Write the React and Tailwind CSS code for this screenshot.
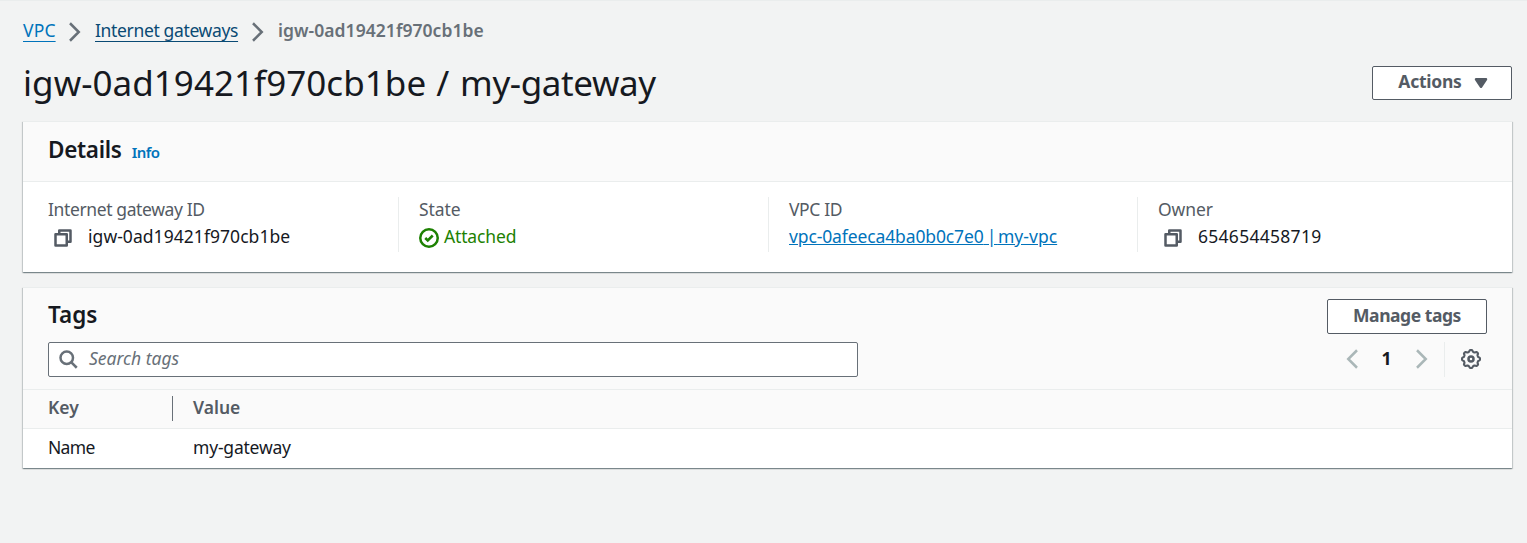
import React from "react";

function Icon({ children, className = "" }) {
  return (
    <svg
      viewBox="0 0 16 16"
      fill="none"
      stroke="currentColor"
      strokeWidth="2"
      className={"block h-5 w-5 shrink-0 " + className}
    >
      {children}
    </svg>
  );
}

const ChevronRight = ({ className }) => (
  <Icon className={className}>
    <path d="M4 1l7 7-7 7" />
  </Icon>
);

const ChevronLeft = ({ className }) => (
  <Icon className={className}>
    <path d="M12 1L5 8l7 7" />
  </Icon>
);

const CopyIcon = () => (
  <Icon className="text-[#545b64]">
    <path d="M2 5h9v9H2z" strokeLinejoin="round" />
    <path d="M5 5V2h9v9h-3" strokeLinejoin="round" />
  </Icon>
);

// Outline of an eight-lobed gear with rounded teeth.
const gearPoints = Array.from({ length: 96 }, (_, i) => {
  const a = (i / 96) * 2 * Math.PI;
  const r = 6.55 + 0.72 * Math.tanh(1.8 * Math.cos(8 * a));
  return `${(8 + r * Math.cos(a)).toFixed(2)},${(8 + r * Math.sin(a)).toFixed(2)}`;
}).join(" ");

const GearIcon = () => (
  <Icon className="text-[#545b64]">
    <polygon points={gearPoints} strokeWidth="1.7" strokeLinejoin="round" />
    <circle cx="8" cy="8" r="2" />
  </Icon>
);

function Field({ label, first, tight, children }) {
  return (
    <div
      className={
        "h-[55px] " + (first ? "pl-[25px]" : "border-l border-[#eaeded] pl-5")
      }
    >
      <div
        className={
          "-mt-px h-[27px] leading-[27px] text-[#545b64] " +
          (tight ? "tracking-[-0.38px]" : "tracking-[-0.1px]")
        }
      >
        {label}
      </div>
      <div className="flex h-[27px] items-center leading-[27px]">{children}</div>
    </div>
  );
}

const panel =
  "bg-white border-t border-[#eaeded] shadow-[0_1px_1px_0_rgba(0,28,36,0.3),1px_1px_1px_0_rgba(0,28,36,0.15),-1px_1px_1px_0_rgba(0,28,36,0.15)]";

export default function App() {
  return (
    <div className="h-[543px] w-[1527px] overflow-hidden border-t border-[#eaeded] bg-[#f2f3f3] pl-[23px] pr-[15px] font-['Noto_Sans',sans-serif] text-[17.5px] text-[#16191f]">
      <nav className="mt-[15px] flex h-7 items-center leading-7">
        <a className="w-[33px] tracking-[0.15px] text-[#0073bb] underline decoration-1 underline-offset-4">VPC</a>
        <ChevronRight className="ml-[9px] mr-[10px] mt-[3px] text-[#687078]" />
        <a className="w-[144px] whitespace-nowrap tracking-[-0.35px] text-[#0a4a74] underline decoration-1 underline-offset-4">Internet gateways</a>
        <ChevronRight className="ml-[9px] mr-[10px] mt-[3px] text-[#687078]" />
        <span className="font-semibold tracking-[0.05px] text-[#687078]">igw-0ad19421f970cb1be</span>
      </nav>

      <header className="mt-[14px] flex h-[50px] justify-between">
        <h1 className="text-[35px] leading-[50px]">
          <span className="tracking-[0.04px]">igw-0ad19421f970cb1be</span>
          <span className="tracking-[0.9px]"> / </span>
          <span className="tracking-[-0.4px]">my-gateway</span>
        </h1>
        <button className="mt-2 flex h-[34px] w-[140px] items-center rounded-[2px] border border-[#545b64] bg-white pl-[25px] font-bold text-[#545b64]">
          <span className="-mt-[3px] w-[64px] tracking-[-0.25px]">Actions</span>
          <Icon className="ml-[9px]">
            <path d="M4 5h8l-4 6z" fill="currentColor" strokeLinejoin="round" />
          </Icon>
        </button>
      </header>

      <section className={"mt-[13px] h-[151px] w-[1489px] " + panel}>
        <div className="flex h-[60px] items-baseline border-b border-[#eaeded] bg-[#fafafa] pl-[25px]">
          <h2 className="text-[22.5px] font-semibold leading-[55px] tracking-[-0.3px]">Details</h2>
          <a className="ml-[10px] text-[15px] font-semibold tracking-[-0.5px] text-[#0073bb]">Info</a>
        </div>
        <div className="grid grid-cols-[375px_370px_369px_375px] pt-[15px]">
          <Field label="Internet gateway ID" first tight>
            <div className="ml-[5px] mr-[15px] pt-[3px]"><CopyIcon /></div>
            <span className="tracking-[0.05px]">igw-0ad19421f970cb1be</span>
          </Field>
          <Field label="State">
            <div className="mr-[5px] pt-[3px] text-[#1d8102]">
              <Icon>
                <circle cx="8" cy="8" r="7" />
                <path d="M5 8l2 2 4-4" />
              </Icon>
            </div>
            <span className="tracking-[-0.15px] text-[#1d8102]">Attached</span>
          </Field>
          <Field label="VPC ID" tight>
            <a className="whitespace-pre text-[#0073bb] underline">
              <span className="tracking-[-0.12px]">vpc-0afeeca4ba0b0c7e0</span>
              <span className="tracking-[-1.5px]"> | </span>
              <span className="tracking-[0.05px]">my-vpc</span>
            </a>
          </Field>
          <Field label="Owner">
            <div className="ml-[5px] mr-[15px] pt-[3px]"><CopyIcon /></div>
            <span className="tracking-[0.28px]">654654458719</span>
          </Field>
        </div>
      </section>

      <section className={"mt-[15px] h-[181px] w-[1489px] " + panel}>
        <div className="h-[102px] border-b border-[#eaeded] bg-[#fafafa] pl-[25px] pr-[25px]">
          <div className="flex h-[54px] justify-between">
            <h2 className="text-[22.5px] font-semibold leading-[54px]">Tags</h2>
            <button className="mt-[11px] h-[35px] w-[160px] rounded-[2px] border border-[#545b64] bg-white pb-[2px] font-bold tracking-[-0.45px] text-[#545b64]">
              Manage tags
            </button>
          </div>
          <div className="flex h-[35px] justify-between">
            <div className="flex h-[35px] w-[810px] items-center rounded-[2px] border border-[#687078] bg-white pl-[9px]">
              <Icon className="-mt-px text-[#687078]">
                <circle cx="7" cy="7" r="5" />
                <path d="M15 15l-4.500-4.500" />
              </Icon>
              <span className="-mt-[2px] ml-[11px] italic text-[#687078]">Search tags</span>
            </div>
            <div className="flex items-center">
              <ChevronLeft className="-mt-px text-[#aab7b8]" />
              <span className="-mt-[2px] w-[50px] pr-px text-center font-bold">1</span>
              <ChevronRight className="-mt-px text-[#aab7b8]" />
              <div className="ml-3 flex h-[35px] items-center border-l border-[#eaeded] pl-4 pr-[6px] pb-px">
                <GearIcon />
              </div>
            </div>
          </div>
        </div>
        <div className="flex h-[39px] items-center border-b border-[#eaeded] bg-[#fafafa] pb-[2px] pl-[25px] font-semibold text-[#545b64]">
          <div className="flex h-[25px] w-[125px] items-center border-r border-[#687078] pb-px">Key</div>
          <div className="pb-px pl-5">Value</div>
        </div>
        <div className="flex h-[39px] items-center pb-[2px] pl-[25px]">
          <div className="w-[125px] tracking-[-0.7px]">Name</div>
          <div className="pl-5 tracking-[-0.2px]">my-gateway</div>
        </div>
      </section>
    </div>
  );
}
